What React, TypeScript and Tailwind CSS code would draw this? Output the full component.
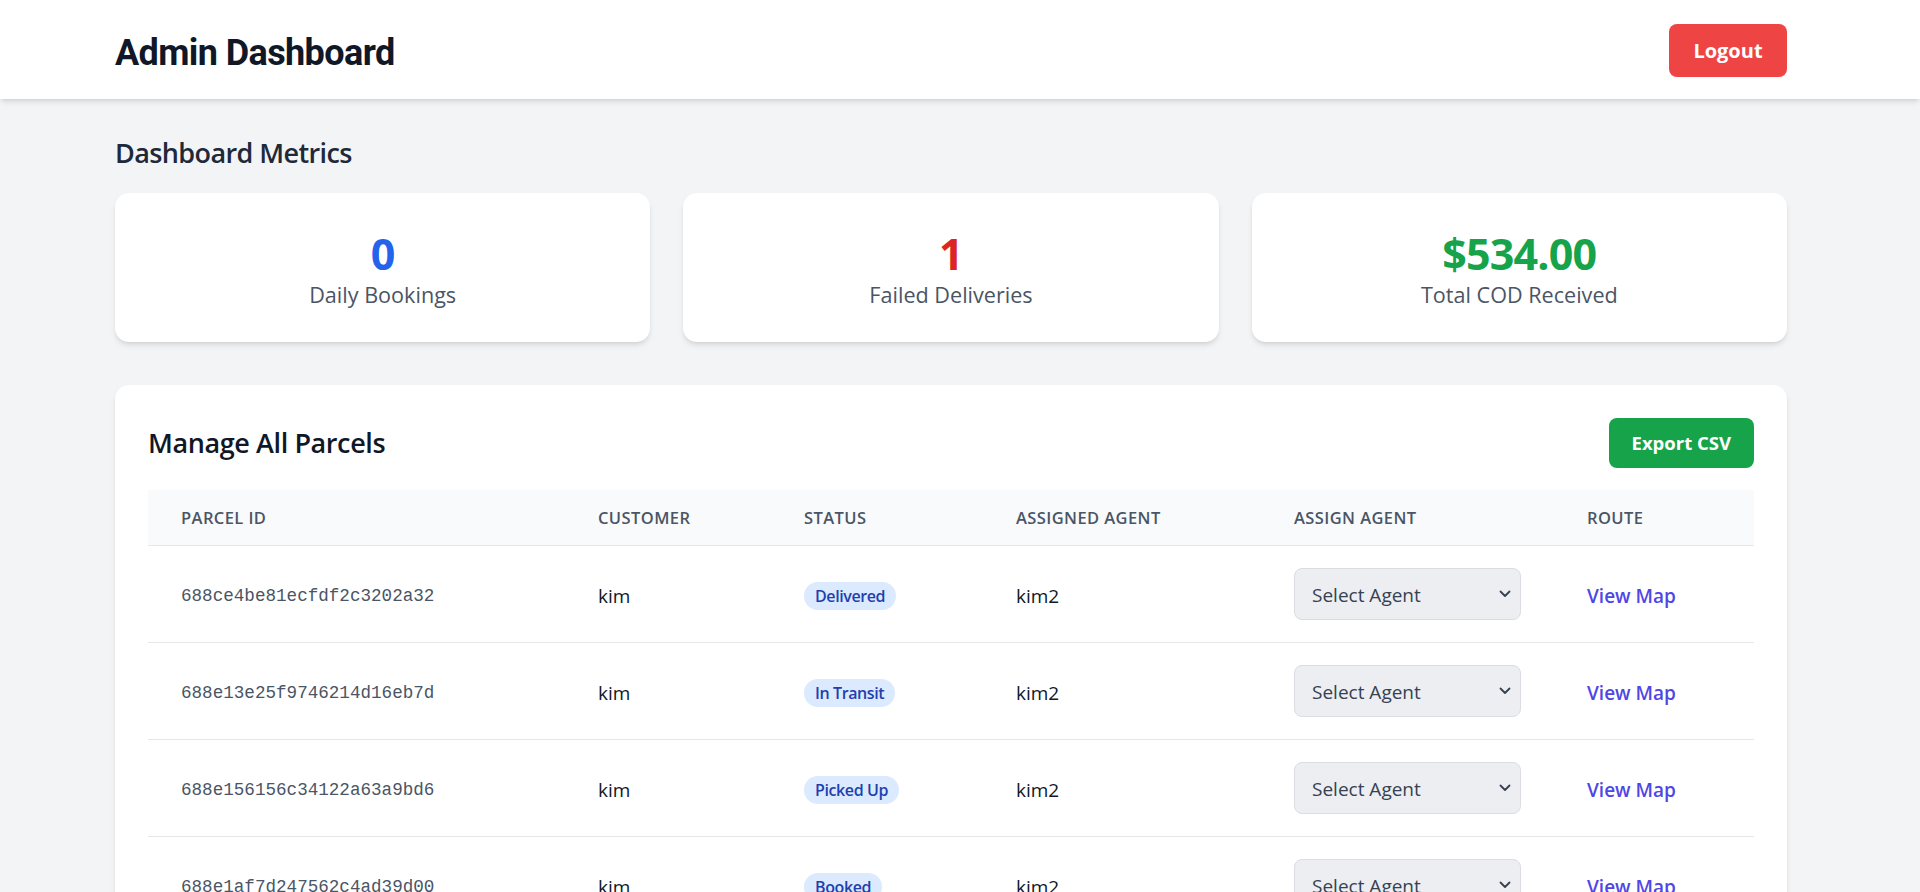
import React from 'react'

type Parcel = {
  id: string
  customer: string
  status: string
  agent: string
}

const parcels: Parcel[] = [
  {id: '688ce4be81ecfdf2c3202a32', customer: 'kim', status: 'Delivered', agent: 'kim2'},
  {id: '688e13e25f9746214d16eb7d', customer: 'kim', status: 'In Transit', agent: 'kim2'},
  {id: '688e156156c34122a63a9bd6', customer: 'kim', status: 'Picked Up', agent: 'kim2'},
  {id: '688e1af7d247562c4ad39d00', customer: 'kim', status: 'Booked', agent: 'kim2'},
]

const MetricCard = ({value, label, color}: {value: string, label: string, color: string}) => (
  <div className="bg-white rounded-[14px] shadow-md h-[149px] flex flex-col items-center justify-center pt-[5px]">
    <p className={`text-[43px] leading-[48px] font-bold tracking-[-0.8px] ${color}`}>{value}</p>
    <p className="text-[21.6px] leading-[33px] text-gray-600">{label}</p>
  </div>
)

const App = () => {
  return (
    <div className="min-h-screen bg-[#f3f4f6] font-['Open_Sans',sans-serif]">
      <header className="bg-white shadow-md">
        <div className="w-[1672px] ml-[115px] h-[99px] flex items-center justify-between">
          <h1 className="text-[36px] leading-[43px] font-bold text-gray-900 font-['Roboto',sans-serif] tracking-[-0.6px] mt-[7px]">Admin Dashboard</h1>
          <button className="bg-[#ef4444] text-white font-bold text-[20px] rounded-lg h-[53px] w-[118px] mt-[2px]">Logout</button>
        </div>
      </header>

      <main className="w-[1672px] ml-[115px] pt-[35px] pb-[40px]">
        <h2 className="text-[27px] leading-[38px] font-semibold text-gray-800 mb-[21px] tracking-[-0.6px]">Dashboard Metrics</h2>

        <div className="grid grid-cols-3 gap-[33px]">
          <MetricCard value="0" label="Daily Bookings" color="text-[#2563eb]" />
          <MetricCard value="1" label="Failed Deliveries" color="text-[#dc2626]" />
          <MetricCard value="$534.00" label="Total COD Received" color="text-[#16a34a]" />
        </div>

        <section className="mt-[43px] bg-white rounded-[14px] shadow-md px-[33px] pt-[33px] pb-[33px]">
          <div className="flex items-center justify-between mb-[22px]">
            <h2 className="text-[27px] leading-[38px] font-semibold text-gray-900 tracking-[-0.4px]">Manage All Parcels</h2>
            <button className="bg-[#16a34a] text-white font-bold text-[18.5px] rounded-lg h-[50px] px-[23px]">Export CSV</button>
          </div>

          <table className="w-full table-fixed border-collapse">
            <colgroup>
              <col className="w-[418px]" />
              <col className="w-[206px]" />
              <col className="w-[212px]" />
              <col className="w-[278px]" />
              <col className="w-[293px]" />
              <col className="w-[199px]" />
            </colgroup>
            <thead>
              <tr className="bg-[#f9fafb] border-b border-gray-200 h-[55px]">
                <th className="pl-[33px] pt-[3px] text-left text-[16.5px] font-semibold uppercase tracking-wide text-gray-600">Parcel ID</th>
                <th className="pl-[32px] pt-[3px] text-left text-[16.5px] font-semibold uppercase tracking-wide text-gray-600">Customer</th>
                <th className="pl-[32px] pt-[3px] text-left text-[16.5px] font-semibold uppercase tracking-wide text-gray-600">Status</th>
                <th className="pl-[32px] pt-[3px] text-left text-[16.5px] font-semibold uppercase tracking-wide text-gray-600">Assigned Agent</th>
                <th className="pl-[32px] pt-[3px] text-left text-[16.5px] font-semibold uppercase tracking-wide text-gray-600">Assign Agent</th>
                <th className="pl-[32px] pt-[3px] text-left text-[16.5px] font-semibold uppercase tracking-wide text-gray-600">Route</th>
              </tr>
            </thead>
            <tbody>
              {parcels.map((p) => (
                <tr key={p.id} className="border-b border-gray-200">
                  <td className="pl-[33px] pt-[25px] pb-[19px] font-['Liberation_Mono',monospace] text-[17.6px] text-gray-600">{p.id}</td>
                  <td className="pl-[32px] pt-[25px] pb-[19px] text-[19px] text-gray-900">{p.customer}</td>
                  <td className="pl-[32px] py-[22px]">
                    <span className="inline-block bg-[#dbeafe] text-[#1e40af] text-[16px] font-semibold tracking-[-0.4px] leading-[28px] px-[11px] rounded-full mt-[4px]">{p.status}</span>
                  </td>
                  <td className="pl-[32px] pt-[25px] pb-[19px] text-[19px] text-gray-900">{p.agent}</td>
                  <td className="pl-[32px] py-[22px]">
                    <div className="relative w-[227px]">
                      <select defaultValue="" className="appearance-none w-full h-[52px] bg-[#eceef1] border border-[#dadde2] rounded-lg pl-[17px] pt-[3px] text-[19px] text-gray-700 outline-none">
                        <option value="">Select Agent</option>
                        <option value="kim2">kim2</option>
                      </select>
                      <svg className="absolute right-[10px] top-[22px] pointer-events-none" width="12" height="8" viewBox="0 0 12 8" fill="none">
                        <path d="M1.5 1.5L6 6L10.5 1.5" stroke="#374151" strokeWidth="1.8" strokeLinecap="round" strokeLinejoin="round" />
                      </svg>
                    </div>
                  </td>
                  <td className="pl-[32px] pt-[25px] pb-[19px]">
                    <a href="#" className="text-[19px] font-semibold text-[#4f46e5]">View Map</a>
                  </td>
                </tr>
              ))}
            </tbody>
          </table>
        </section>
      </main>
    </div>
  )
}

export default App
